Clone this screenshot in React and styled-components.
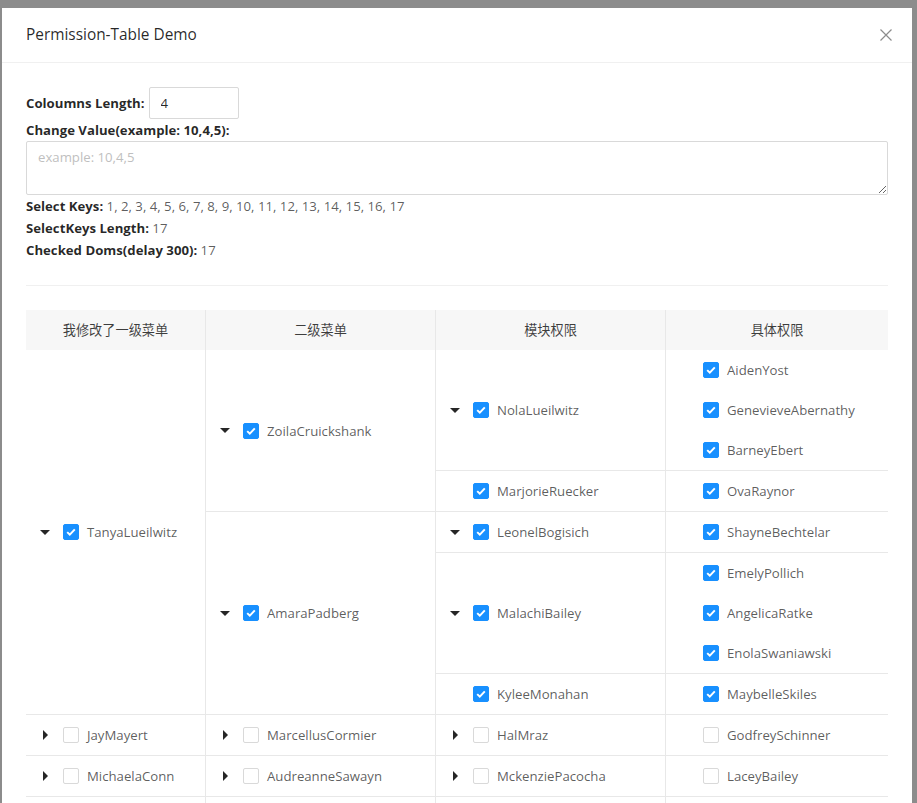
import styled, { createGlobalStyle } from "styled-components";

const GlobalStyle = createGlobalStyle`
  html, body {
    margin: 0;
    padding: 0;
    overflow: hidden;
  }
  body {
    font-family: "Open Sans", "Noto Sans CJK SC", sans-serif;
    font-size: 13.2px;
    color: rgba(0, 0, 0, 0.85);
  }
  * {
    box-sizing: border-box;
  }
`;

// 表格数据: 一级 -> 二级 -> 模块 -> 具体权限
const data = [
  {
    title: "TanyaLueilwitz",
    checked: true,
    caret: "down",
    children: [
      {
        title: "ZoilaCruickshank",
        checked: true,
        caret: "down",
        children: [
          {
            title: "NolaLueilwitz",
            checked: true,
            caret: "down",
            perms: ["AidenYost", "GenevieveAbernathy", "BarneyEbert"],
          },
          { title: "MarjorieRuecker", checked: true, perms: ["OvaRaynor"] },
        ],
      },
      {
        title: "AmaraPadberg",
        checked: true,
        caret: "down",
        children: [
          {
            title: "LeonelBogisich",
            checked: true,
            caret: "down",
            perms: ["ShayneBechtelar"],
          },
          {
            title: "MalachiBailey",
            checked: true,
            caret: "down",
            perms: ["EmelyPollich", "AngelicaRatke", "EnolaSwaniawski"],
          },
          { title: "KyleeMonahan", checked: true, perms: ["MaybelleSkiles"] },
        ],
      },
    ],
  },
  {
    title: "JayMayert",
    caret: "right",
    children: [
      {
        title: "MarcellusCormier",
        caret: "right",
        children: [
          { title: "HalMraz", caret: "right", perms: ["GodfreySchinner"] },
        ],
      },
    ],
  },
  {
    title: "MichaelaConn",
    caret: "right",
    children: [
      {
        title: "AudreanneSawayn",
        caret: "right",
        children: [
          { title: "MckenziePacocha", caret: "right", perms: ["LaceyBailey"] },
        ],
      },
    ],
  },
  {
    title: "ElianeWhite",
    caret: "right",
    children: [
      {
        title: "KeaganHowe",
        caret: "right",
        children: [
          { title: "DorthyLang", caret: "right", perms: ["ArloKemmer"] },
        ],
      },
    ],
  },
];

const columns = ["我修改了一级菜单", "二级菜单", "模块权限", "具体权限"];
const colWidths = [180, 230, 230];

function Caret({ dir }) {
  if (!dir) return <CaretBox />;
  return (
    <CaretBox>
      {dir === "down" ? (
        <svg width="10" height="5" viewBox="0 0 10 5">
          <path d="M0 0 L10 0 L5 5 Z" fill="#262626" />
        </svg>
      ) : (
        <svg width="5" height="10" viewBox="0 0 5 10">
          <path d="M0 0 L5 5 L0 10 Z" fill="#262626" />
        </svg>
      )}
    </CaretBox>
  );
}

function Check({ checked }) {
  return (
    <CheckBox checked={checked}>
      {checked && (
        <svg width="10" height="8" viewBox="0 0 10 8">
          <path
            d="M1.2 4.1 L3.8 6.6 L8.8 1.4"
            fill="none"
            stroke="#fff"
            strokeWidth="2"
          />
        </svg>
      )}
    </CheckBox>
  );
}

function Item({ caret, checked, title }) {
  return (
    <ItemLine>
      <Caret dir={caret} />
      <Check checked={checked} />
      <ItemText>{title}</ItemText>
    </ItemLine>
  );
}

function TreeRow({ node, level }) {
  return (
    <Row>
      <Cell width={colWidths[level]}>
        <Item caret={node.caret} checked={node.checked} title={node.title} />
      </Cell>
      {node.perms ? (
        <PermCell>
          {node.perms.map((p) => (
            <PermLine key={p}>
              <Item checked={node.checked} title={p} />
            </PermLine>
          ))}
        </PermCell>
      ) : (
        <Nested>
          {node.children.map((c) => (
            <TreeRow key={c.title} node={c} level={level + 1} />
          ))}
        </Nested>
      )}
    </Row>
  );
}

export default function App() {
  const keys = Array.from({ length: 17 }, (_, i) => i + 1).join(", ");
  return (
    <>
      <GlobalStyle />
      <Mask>
        <Modal>
          <Header>
            <Title>Permission-Table Demo</Title>
            <Close>
              <svg width="12" height="12" viewBox="0 0 12 12">
                <path
                  d="M0.5 0.5 L11.5 11.5 M11.5 0.5 L0.5 11.5"
                  stroke="#8c8c8c"
                  strokeWidth="1.2"
                />
              </svg>
            </Close>
          </Header>
          <Body>
            <InlineField>
              <Label>Coloumns Length:</Label>
              <Input defaultValue="4" />
            </InlineField>
            <Label>Change Value(example: 10,4,5):</Label>
            <TextArea rows={2} placeholder="example: 10,4,5" />
            <InfoLine>
              <Label>Select Keys:</Label> {keys}
            </InfoLine>
            <InfoLine>
              <Label>SelectKeys Length:</Label> 17
            </InfoLine>
            <InfoLine>
              <Label>Checked Doms(delay 300):</Label> 17
            </InfoLine>
            <Divider />
            <Table>
              <HeadRow>
                {columns.map((c, i) => (
                  <HeadCell key={c} width={colWidths[i]}>
                    {c}
                  </HeadCell>
                ))}
              </HeadRow>
              {data.map((n) => (
                <TreeRow key={n.title} node={n} level={0} />
              ))}
            </Table>
          </Body>
        </Modal>
      </Mask>
    </>
  );
}

const Mask = styled.div`
  position: fixed;
  inset: 0;
  background: #8c8c8c;
  display: flex;
  align-items: flex-start;
  padding: 8px 5px 0 2px;
  overflow: hidden;
`;

const Modal = styled.div`
  width: 910px;
  background: #fff;
  flex-shrink: 0;
`;

const Header = styled.div`
  display: flex;
  align-items: center;
  justify-content: space-between;
  padding: 16px 24px;
  border-bottom: 1px solid #f0f0f0;
`;

const Title = styled.div`
  font-size: 15.4px;
  line-height: 22px;
  font-weight: 500;
  color: rgba(0, 0, 0, 0.85);
`;

const Close = styled.span`
  display: flex;
  margin-right: -4px;
`;

const Body = styled.div`
  padding: 24px;
  line-height: 22px;
`;

const InlineField = styled.div`
  display: flex;
  align-items: center;
`;

const Label = styled.span`
  font-weight: 700;
  color: rgba(0, 0, 0, 0.85);
  display: inline-block;
`;

const Input = styled.input`
  width: 90px;
  height: 32px;
  margin-left: 4px;
  padding: 4px 11px;
  border: 1px solid #d9d9d9;
  border-radius: 2px;
  font: inherit;
  color: rgba(0, 0, 0, 0.85);
  outline: none;
`;

const TextArea = styled.textarea`
  display: block;
  width: 100%;
  height: 54px;
  padding: 4px 11px;
  border: 1px solid #d9d9d9;
  border-radius: 2px;
  font: inherit;
  line-height: 22px;
  resize: vertical;
  outline: none;

  &::placeholder {
    color: #bfbfbf;
  }
`;

const InfoLine = styled.div`
  color: rgba(0, 0, 0, 0.65);
`;

const Divider = styled.div`
  height: 1px;
  background: #f0f0f0;
  margin: 24px 0;
`;

const Table = styled.div`
  color: rgba(0, 0, 0, 0.65);
`;

const HeadRow = styled.div`
  display: flex;
  height: 40px;
  background: #f7f7f7;
`;

const HeadCell = styled.div`
  display: flex;
  align-items: center;
  justify-content: center;
  color: rgba(0, 0, 0, 0.75);
  flex: ${(p) => (p.width ? `0 0 ${p.width}px` : "1")};
  border-right: ${(p) => (p.width ? "1px solid #e8e8e8" : "none")};
`;

const Row = styled.div`
  display: flex;
  border-bottom: 1px solid #e8e8e8;
`;

const Nested = styled.div`
  flex: 1;
  display: flex;
  flex-direction: column;

  & > ${Row}:last-child {
    border-bottom: none;
  }
`;

const Cell = styled.div`
  flex: 0 0 ${(p) => p.width}px;
  display: flex;
  align-items: center;
  border-right: 1px solid #e8e8e8;
`;

const PermCell = styled.div`
  flex: 1;
  display: flex;
  flex-direction: column;
`;

const PermLine = styled.div`
  height: 40px;
  display: flex;
  align-items: center;
`;

const ItemLine = styled.div`
  display: flex;
  align-items: center;
  padding-left: 14px;
  height: 40px;
`;

const CaretBox = styled.span`
  width: 10px;
  margin-right: 13px;
  display: flex;
  align-items: center;
  justify-content: center;
`;

const CheckBox = styled.span`
  width: 16px;
  height: 16px;
  border-radius: 2px;
  display: flex;
  align-items: center;
  justify-content: center;
  background: ${(p) => (p.checked ? "#1890ff" : "#fff")};
  border: 1px solid ${(p) => (p.checked ? "#1890ff" : "#d9d9d9")};
`;

const ItemText = styled.span`
  margin-left: 8px;
  white-space: nowrap;
`;
